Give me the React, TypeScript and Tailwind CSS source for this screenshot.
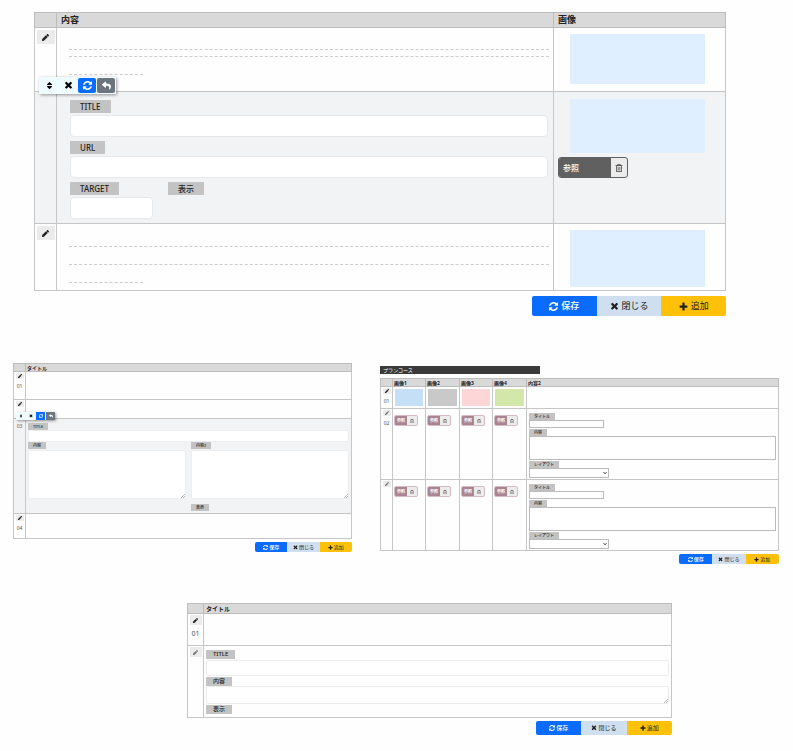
import { useId } from 'react';
import type { ReactNode } from 'react';
import { FaChevronDown, FaPen, FaRegTrashAlt, FaReply, FaSort } from 'react-icons/fa';
import { clsx } from 'clsx';

type Size = 'sm' | 'md' | 'lg';

const labelSize = {
  sm: 'h-[7px] px-[5px] text-[4px] leading-[7px]',
  md: 'h-[9px] px-[7px] text-[6px] leading-[9px]',
  lg: 'h-[13px] px-[10px] text-[8px] leading-[13px]',
};

const headSize = {
  sm: 'h-[8px] px-px text-[5px] leading-[6px]',
  md: 'h-[10px] px-[2px] text-[6px] leading-[8px]',
  lg: 'h-[15px] px-[4px] text-[9px] leading-[12px]',
};

const pencilSize = {
  sm: 'h-[6px] w-[8px] text-[4px]',
  md: 'h-[10px] w-[12px] text-[5px]',
  lg: 'h-[14px] w-[18px] text-[7px]',
};

function RefreshIcon() {
  return (
    <svg viewBox="0 0 1536 1536" width="1em" height="1em" fill="currentColor" aria-hidden="true">
      <path d="M1511 928q0 5-1 7-64 268-268 434.5t-478 166.5q-146 0-282.5-55t-243.5-157l-129 129q-19 19-45 19t-45-19-19-45v-448q0-26 19-45t45-19h448q26 0 45 19t19 45-19 45l-137 137q71 66 161 102t187 36q134 0 250-65t186-179q11-17 53-117 8-23 30-23h192q13 0 22.5 9.5t9.5 22.5zm25-800v448q0 26-19 45t-45 19h-448q-26 0-45-19t-19-45 19-45l138-138q-148-137-349-137-134 0-250 65t-186 179q-11 17-53 117-8 23-30 23h-199q-13 0-22.5-9.5t-9.5-22.5v-7q65-268 270-434.5t480-166.5q146 0 284 55.5t245 156.5l130-129q19-19 45-19t45 19 19 45z" />
    </svg>
  );
}

function TimesIcon() {
  return (
    <svg viewBox="128 240 1536 1536" width="1em" height="1em" fill="currentColor" aria-hidden="true">
      <path d="M1490 1322q0 40-28 68l-136 136q-28 28-68 28t-68-28l-294-294-294 294q-28 28-68 28t-68-28l-136-136q-28-28-28-68t28-68l294-294-294-294q-28-28-28-68t28-68l136-136q28-28 68-28t68 28l294 294 294-294q28-28 68-28t68 28l136 136q28 28 28 68t-28 68l-294 294 294 294q28 28 28 68z" />
    </svg>
  );
}

function PlusIcon() {
  return (
    <svg viewBox="0 0 16 16" width="1em" height="1em" fill="currentColor" aria-hidden="true">
      <path d="M7 1h2q1 0 1 1v4h4q1 0 1 1v2q0 1-1 1h-4v4q0 1-1 1H7q-1 0-1-1v-4H2q-1 0-1-1V7q0-1 1-1h4V2q0-1 1-1z" />
    </svg>
  );
}

function HeadRow({ size, cols }: { size: Size; cols: string[] }) {
  return (
    <thead>
      <tr className="bg-[#d9d9d9]">
        <th className="border border-[#bdbdbd]" aria-label="操作" />
        {cols.map((col) => (
          <th key={col} className={clsx('border border-[#bdbdbd] py-0 text-left font-bold whitespace-nowrap', headSize[size])}>
            {col}
          </th>
        ))}
      </tr>
    </thead>
  );
}

function Cell({ className, children }: { className?: string; children?: ReactNode }) {
  return <td className={clsx('border border-[#c6c6c6] p-0 align-top', className)}>{children}</td>;
}

function Pencil({ size, faded }: { size: Size; faded?: boolean }) {
  return (
    <button
      type="button"
      aria-label="編集"
      className={clsx(
        'mx-auto flex items-center justify-center rounded-[1px] bg-[#ebebeb]',
        faded ? 'text-[#777]' : 'text-[#222]',
        pencilSize[size]
      )}
    >
      <FaPen />
    </button>
  );
}

function RowNo({ size, children }: { size: 'sm' | 'md'; children: ReactNode }) {
  return (
    <p
      className={clsx(
        'text-center text-[#555]',
        size === 'sm' ? 'mt-[4px] text-[5px] leading-[6px]' : 'mt-[5px] text-[7px] leading-[8px]'
      )}
    >
      {children}
    </p>
  );
}

function Tag({ size, htmlFor, children }: { size: Size; htmlFor?: string; children: ReactNode }) {
  const className = clsx('block w-fit bg-[#c3c3c3] font-medium whitespace-nowrap', labelSize[size]);
  return htmlFor ? (
    <label htmlFor={htmlFor} className={className}>{children}</label>
  ) : (
    <span className={className}>{children}</span>
  );
}

interface FieldProps {
  size: Size;
  label: string;
  kind?: 'input' | 'textarea' | 'select';
  grip?: boolean;
  className: string;
}

function Field({ size, label, kind = 'input', grip, className }: FieldProps) {
  const id = useId();
  const control = clsx('block appearance-none border bg-white px-[4px] outline-none', className);
  return (
    <div>
      <Tag size={size} htmlFor={id}>{label}</Tag>
      {kind === 'input' && <input id={id} type="text" className={control} />}
      {kind === 'textarea' && (
        <div className="relative">
          <textarea id={id} className={clsx(control, 'resize-none')} />
          {grip && (
            <svg viewBox="0 0 6 6" className="absolute right-px bottom-px size-[4px]" stroke="#999" aria-hidden="true">
              <path d="M0 6L6 0M3 6L6 3" />
            </svg>
          )}
        </div>
      )}
      {kind === 'select' && (
        <div className="relative w-fit">
          <select id={id} className={control} />
          <FaChevronDown className="pointer-events-none absolute inset-y-0 right-[2px] my-auto size-[4px]" />
        </div>
      )}
    </div>
  );
}

function RowTools({ size }: { size: 'sm' | 'lg' }) {
  const sm = size === 'sm';
  const item = clsx('flex items-center justify-center', sm ? 'h-[8px] w-[9px]' : 'h-[15px] w-[18px] rounded-[2px]');
  return (
    <div
      className={clsx(
        'absolute z-10 flex bg-[#effcff] text-black shadow-[1px_1px_3px_#0006]',
        sm ? '-top-[7px] left-[2px] gap-px text-[4px]' : '-top-[15px] left-[4px] gap-px p-px text-[9px]'
      )}
    >
      <button type="button" aria-label="並べ替え" className={item}><FaSort /></button>
      <button type="button" aria-label="削除" className={item}><TimesIcon /></button>
      <button type="button" aria-label="更新" className={clsx(item, 'bg-[#0a6cff] text-white')}><RefreshIcon /></button>
      <button type="button" aria-label="戻す" className={clsx(item, 'bg-[#6c757d] text-white')}><FaReply /></button>
    </div>
  );
}

const footerSize = {
  sm: 'mt-[3px] h-[10px] text-[5px] leading-[10px]',
  md: 'mt-[3px] h-[14px] text-[6px] leading-[14px]',
  lg: 'mt-[5px] h-[20px] text-[9px] leading-[20px]',
};

function Footer({ size, className }: { size: Size; className: string }) {
  const item = clsx('flex flex-1 items-center justify-center whitespace-nowrap', size === 'lg' ? 'gap-[3px]' : 'gap-px');
  return (
    <div className={clsx('ml-auto flex overflow-hidden rounded-[2px]', footerSize[size], className)}>
      <button type="button" className={clsx(item, 'bg-[#0a6cff] font-medium text-white')}><RefreshIcon />保存</button>
      <button type="button" className={clsx(item, 'bg-[#cfdfef]')}><TimesIcon />閉じる</button>
      <button type="button" className={clsx(item, 'bg-[#ffc107]')}><PlusIcon />追加</button>
    </div>
  );
}

function Browse({ small }: { small?: boolean }) {
  return (
    <div
      className={clsx(
        'flex overflow-hidden border',
        small
          ? 'mt-[6px] ml-px h-[11px] w-[24px] rounded-[2px] border-[#d3bcc4] bg-[#ececec] text-[4px]'
          : 'mt-[4px] ml-[4px] h-[21px] w-[70px] rounded-[3px] border-[#606060] bg-[#ececec] text-[8px]'
      )}
    >
      <button
        type="button"
        className={clsx(
          'text-left whitespace-nowrap text-white',
          small ? 'w-[12px] bg-[#a98592] pl-[2px] font-bold' : 'w-[52px] bg-[#606060] pl-[4px] font-medium'
        )}
      >
        参照
      </button>
      <button type="button" aria-label="削除" className="flex flex-1 items-center justify-center text-[#444]">
        <FaRegTrashAlt />
      </button>
    </div>
  );
}

function Rule({ className }: { className?: string }) {
  return <div className={clsx('border-t border-dashed border-[#ccc]', className)} />;
}

function LinkTable() {
  const box = 'mt-[2px] h-[22px] rounded-[4px] border-[#e6e8ea]';
  return (
    <section className="pr-[67px] pl-[34px]">
      <table className="w-full table-fixed border-collapse">
        <colgroup>
          <col className="w-[22px]" />
          <col />
          <col className="w-[172px]" />
        </colgroup>
        <HeadRow size="lg" cols={['内容', '画像']} />
        <tbody>
          <tr className="h-[64px]">
            <Cell className="pt-[2px]"><Pencil size="lg" /></Cell>
            <Cell className="pt-[21px] pr-[4px] pl-[12px]">
              <Rule />
              <Rule className="mt-[6px]" />
              <Rule className="mt-[17px] w-[74px]" />
            </Cell>
            <Cell className="pt-[6px]"><div className="mr-[20px] ml-[16px] h-[50px] bg-[#dfefff]" /></Cell>
          </tr>
          <tr className="h-[132px] bg-[#f2f3f5]">
            <Cell className="relative"><RowTools size="lg" /></Cell>
            <Cell className="pt-[8px] pr-[5px] pl-[13px]">
              <div className="space-y-[4px]">
                <Field size="lg" label="TITLE" className={clsx(box, 'w-full')} />
                <Field size="lg" label="URL" className={clsx(box, 'w-full')} />
                <div className="grid grid-cols-[83px_auto] gap-[15px]">
                  <Field size="lg" label="TARGET" className={clsx(box, 'w-full')} />
                  <Tag size="lg">表示</Tag>
                </div>
              </div>
            </Cell>
            <Cell className="pt-[7px]">
              <div className="mr-[20px] ml-[16px] h-[54px] bg-[#dfefff]" />
              <Browse />
            </Cell>
          </tr>
          <tr className="h-[67px]">
            <Cell className="pt-[2px]"><Pencil size="lg" /></Cell>
            <Cell className="pt-[22px] pr-[4px] pl-[12px]">
              <Rule />
              <Rule className="mt-[17px]" />
              <Rule className="mt-[17px] w-[74px]" />
            </Cell>
            <Cell className="pt-[6px]"><div className="mr-[20px] ml-[16px] h-[57px] bg-[#dfefff]" /></Cell>
          </tr>
        </tbody>
      </table>
      <Footer size="lg" className="w-[194px]" />
    </section>
  );
}

function ArticleTable() {
  const box = 'w-full rounded-[2px] border-[#eceef0]';
  return (
    <section>
      <table className="w-full table-fixed border-collapse">
        <colgroup>
          <col className="w-[12px]" />
          <col />
        </colgroup>
        <HeadRow size="sm" cols={['タイトル']} />
        <tbody>
          <tr className="h-[28px]">
            <Cell className="pt-px"><Pencil size="sm" /><RowNo size="sm">01</RowNo></Cell>
            <Cell />
          </tr>
          <tr className="h-[19px]">
            <Cell className="pt-px"><Pencil size="sm" /></Cell>
            <Cell />
          </tr>
          <tr className="h-[95px] bg-[#f2f3f5]">
            <Cell className="relative"><RowTools size="sm" /><RowNo size="sm">03</RowNo></Cell>
            <Cell className="px-[2px] pt-[4px]">
              <Field size="sm" label="TITLE" className={clsx(box, 'h-[12px]')} />
              <div className="grid grid-cols-2 gap-x-[5px]">
                <Field size="sm" kind="textarea" grip label="内容" className={clsx(box, 'mt-px h-[49px]')} />
                <Field size="sm" kind="textarea" grip label="内容2" className={clsx(box, 'mt-px h-[49px]')} />
                <div className="col-start-2 mt-[5px]"><Tag size="sm">表示</Tag></div>
              </div>
            </Cell>
          </tr>
          <tr className="h-[25px]">
            <Cell className="pt-px"><Pencil size="sm" /><RowNo size="sm">04</RowNo></Cell>
            <Cell />
          </tr>
        </tbody>
      </table>
      <Footer size="sm" className="w-[97px]" />
    </section>
  );
}

const swatches = ['bg-[#c5dff6]', 'bg-[#c9c9c9]', 'bg-[#fdd7d7]', 'bg-[#d3e7aa]'];

function PlanTable() {
  const box = 'border-[#bbb]';
  return (
    <section className="pt-[3px]">
      <h2 className="mb-[4px] h-[8px] w-2/5 bg-[#3a3a3a] px-[3px] text-[5px] leading-[8px] text-white">プランコース</h2>
      <table className="w-full table-fixed border-collapse">
        <colgroup>
          <col className="w-[12px]" />
          <col className="w-[33px]" />
          <col className="w-[34px]" />
          <col className="w-[33px]" />
          <col className="w-[34px]" />
          <col />
        </colgroup>
        <HeadRow size="sm" cols={['画像1', '画像2', '画像3', '画像4', '内容2']} />
        <tbody>
          <tr className="h-[22px]">
            <Cell className="pt-px"><Pencil size="sm" /><RowNo size="sm">01</RowNo></Cell>
            {swatches.map((color) => (
              <Cell key={color} className="pt-[2px]"><div className={clsx('mx-[2px] h-[17px]', color)} /></Cell>
            ))}
            <Cell />
          </tr>
          {['02', ''].map((no) => (
            <tr key={no} className="h-[71px]">
              <Cell className="pt-px">
                <Pencil size="sm" faded />
                {no && <RowNo size="sm">{no}</RowNo>}
              </Cell>
              {swatches.map((color) => (
                <Cell key={color}><Browse small /></Cell>
              ))}
              <Cell className="px-[2px] pt-[4px]">
                <div className="space-y-px">
                  <Field size="sm" label="タイトル" className={clsx(box, 'h-[8px] w-[75px]')} />
                  <Field size="sm" kind="textarea" label="内容" className={clsx(box, 'h-[24px] w-full')} />
                  <Field size="sm" kind="select" label="レイアウト" className={clsx(box, 'h-[10px] w-[80px]')} />
                </div>
              </Cell>
            </tr>
          ))}
        </tbody>
      </table>
      <Footer size="sm" className="w-[100px]" />
    </section>
  );
}

function NewsTable() {
  const box = 'w-full rounded-[2px] border-[#ececec]';
  return (
    <section className="mt-[39px] pr-[121px] pl-[187px]">
      <table className="w-full table-fixed border-collapse">
        <colgroup>
          <col className="w-[16px]" />
          <col />
        </colgroup>
        <HeadRow size="md" cols={['タイトル']} />
        <tbody>
          <tr className="h-[32px]">
            <Cell className="pt-px"><Pencil size="md" /><RowNo size="md">01</RowNo></Cell>
            <Cell />
          </tr>
          <tr className="h-[72px]">
            <Cell className="pt-px"><Pencil size="md" faded /></Cell>
            <Cell className="px-[2px] pt-[4px]">
              <div className="space-y-px">
                <Field size="md" label="TITLE" className={clsx(box, 'mt-px h-[16px]')} />
                <Field size="md" kind="textarea" grip label="内容" className={clsx(box, 'h-[18px]')} />
                <Tag size="md">表示</Tag>
              </div>
            </Cell>
          </tr>
        </tbody>
      </table>
      <Footer size="md" className="w-[136px]" />
    </section>
  );
}

export default function App() {
  return (
    <main lang="ja" className="min-h-screen bg-[#fefefe] pt-[12px] pb-[15px] font-['Noto_Sans','Noto_Sans_CJK_JP',sans-serif] text-[#222] antialiased">
      <LinkTable />
      <div className="mt-[47px] grid grid-cols-[339fr_399fr] gap-[28px] pr-[14px] pl-[13px]">
        <ArticleTable />
        <PlanTable />
      </div>
      <NewsTable />
    </main>
  );
}
